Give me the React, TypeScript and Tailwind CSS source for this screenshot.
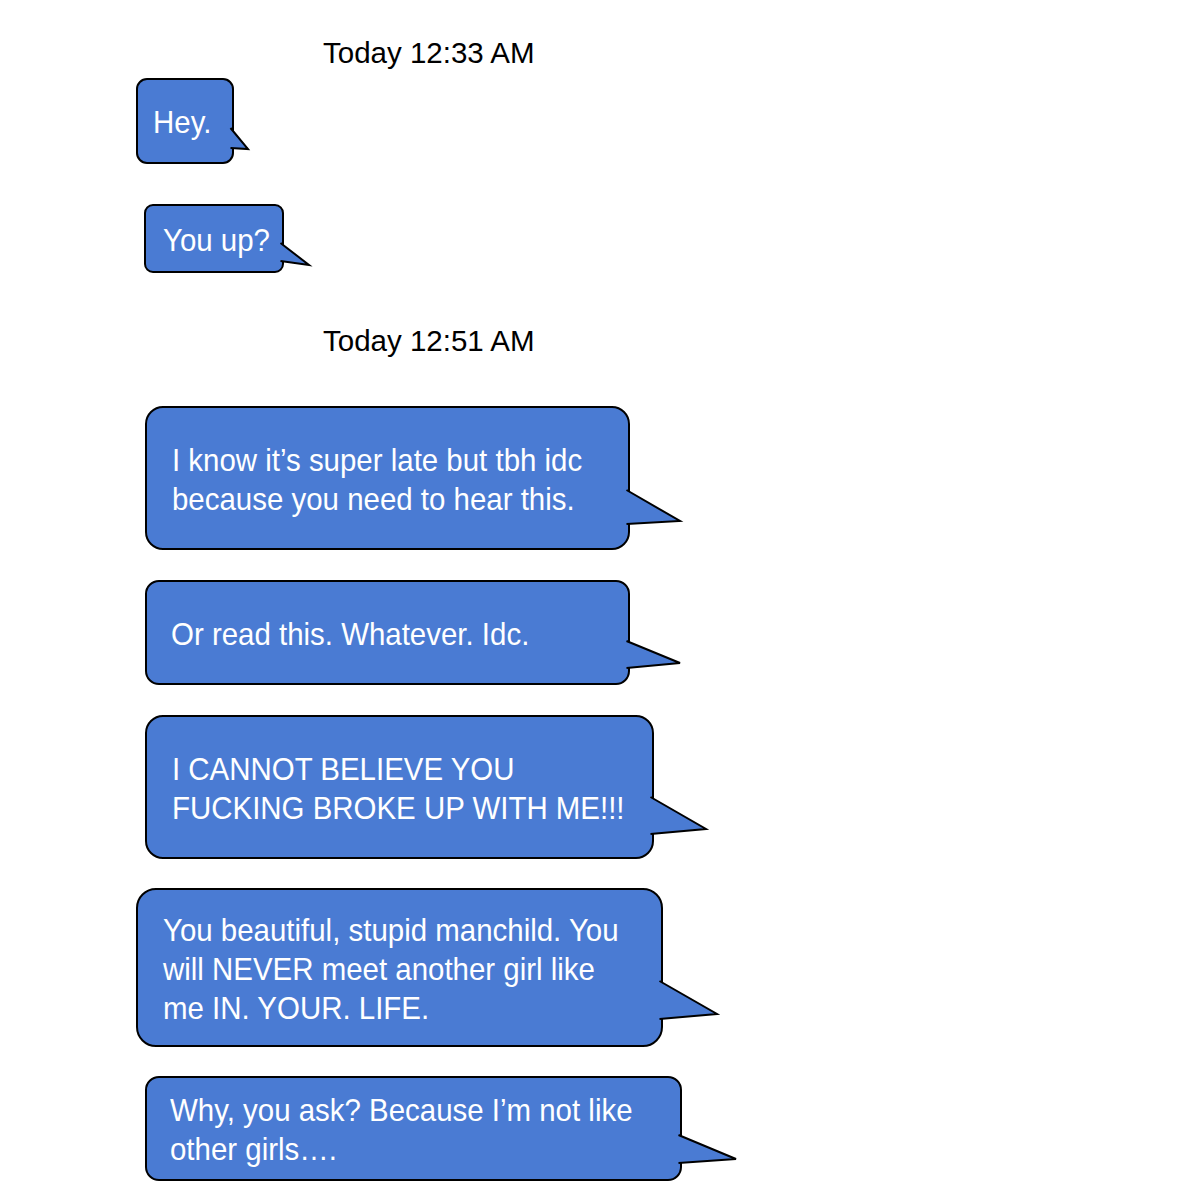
type Tail = { y1: number; tx: number; ty: number; y2: number };

type Msg = {
  lines: string[];
  ml: string;
  mt: string;
  w: string;
  h: string;
  pl: string;
  rounded: string;
  tail: Tail;
};

const messagesA: Msg[] = [
  {
    lines: ["Hey."],
    ml: "ml-[136px]",
    mt: "mt-[9px]",
    w: "w-[98px]",
    h: "h-[86px]",
    pl: "pl-[15px]",
    rounded: "rounded-[11px]",
    tail: { y1: 50, tx: 18, ty: 71, y2: 70 },
  },
  {
    lines: ["You up?"],
    ml: "ml-[144px]",
    mt: "mt-[40px]",
    w: "w-[140px]",
    h: "h-[69px]",
    pl: "pl-[17px]",
    rounded: "rounded-[9px]",
    tail: { y1: 39, tx: 29, ty: 61, y2: 57 },
  },
];

const messagesB: Msg[] = [
  {
    lines: ["I know it\u2019s super late but tbh idc", "because you need to hear this."],
    ml: "ml-[145px]",
    mt: "mt-[49px]",
    w: "w-[485px]",
    h: "h-[144px]",
    pl: "pl-[25px]",
    rounded: "rounded-[18px]",
    tail: { y1: 84, tx: 54, ty: 115, y2: 118 },
  },
  {
    lines: ["Or read this. Whatever. Idc."],
    ml: "ml-[145px]",
    mt: "mt-[30px]",
    w: "w-[485px]",
    h: "h-[105px]",
    pl: "pl-[24px]",
    rounded: "rounded-[14px]",
    tail: { y1: 61, tx: 54, ty: 83, y2: 88 },
  },
  {
    lines: ["I CANNOT BELIEVE YOU", "FUCKING BROKE UP WITH ME!!!"],
    ml: "ml-[145px]",
    mt: "mt-[30px]",
    w: "w-[509px]",
    h: "h-[144px]",
    pl: "pl-[25px]",
    rounded: "rounded-[18px]",
    tail: { y1: 82, tx: 56, ty: 114, y2: 119 },
  },
  {
    lines: [
      "You beautiful, stupid manchild. You",
      "will NEVER meet another girl like",
      "me IN. YOUR. LIFE.",
    ],
    ml: "ml-[136px]",
    mt: "mt-[29px]",
    w: "w-[527px]",
    h: "h-[159px]",
    pl: "pl-[25px]",
    rounded: "rounded-[20px]",
    tail: { y1: 93, tx: 58, ty: 126, y2: 131 },
  },
  {
    lines: ["Why, you ask? Because I\u2019m not like", "other girls\u2026."],
    ml: "ml-[145px]",
    mt: "mt-[29px]",
    w: "w-[537px]",
    h: "h-[105px]",
    pl: "pl-[23px]",
    rounded: "rounded-[14px]",
    tail: { y1: 59, tx: 58, ty: 83, y2: 87 },
  },
];

function Bubble({ msg }: { msg: Msg }) {
  const { y1, tx, ty, y2 } = msg.tail;
  return (
    <div
      className={`relative flex shrink-0 items-center border-2 border-black bg-[#4a7bd3] ${msg.ml} ${msg.mt} ${msg.w} ${msg.h} ${msg.pl} ${msg.rounded}`}
    >
      <div className="mt-[3px] origin-left scale-x-[0.92] whitespace-nowrap text-[32px] leading-[39px] text-white [font-family:'Liberation_Sans',Arial,sans-serif]">
        {msg.lines.map((l) => (
          <div key={l}>{l}</div>
        ))}
      </div>
      <svg
        className="absolute top-[-2px] left-full -ml-[2px] overflow-visible"
        width={tx + 4}
        height={ty + 4}
      >
        <polygon points={`0,${y1} ${tx},${ty} 0,${y2}`} fill="#4a7bd3" />
        <polyline
          points={`0.5,${y1} ${tx},${ty} 0.5,${y2}`}
          fill="none"
          stroke="#000"
          strokeWidth={2}
          strokeLinejoin="miter"
        />
      </svg>
    </div>
  );
}

function Stamp({ text, mt }: { text: string; mt: string }) {
  return (
    <div
      className={`pl-[323px] text-[29.5px] leading-[32px] text-black [font-family:'Liberation_Sans',Arial,sans-serif] ${mt}`}
    >
      {text}
    </div>
  );
}

export default function App() {
  return (
    <div className="flex h-[1188px] w-[1190px] flex-col overflow-hidden bg-white">
      <Stamp text="Today 12:33 AM" mt="mt-[37px]" />
      {messagesA.map((m) => (
        <Bubble key={m.lines[0]} msg={m} />
      ))}
      <Stamp text="Today 12:51 AM" mt="mt-[52px]" />
      {messagesB.map((m) => (
        <Bubble key={m.lines[0]} msg={m} />
      ))}
    </div>
  );
}
